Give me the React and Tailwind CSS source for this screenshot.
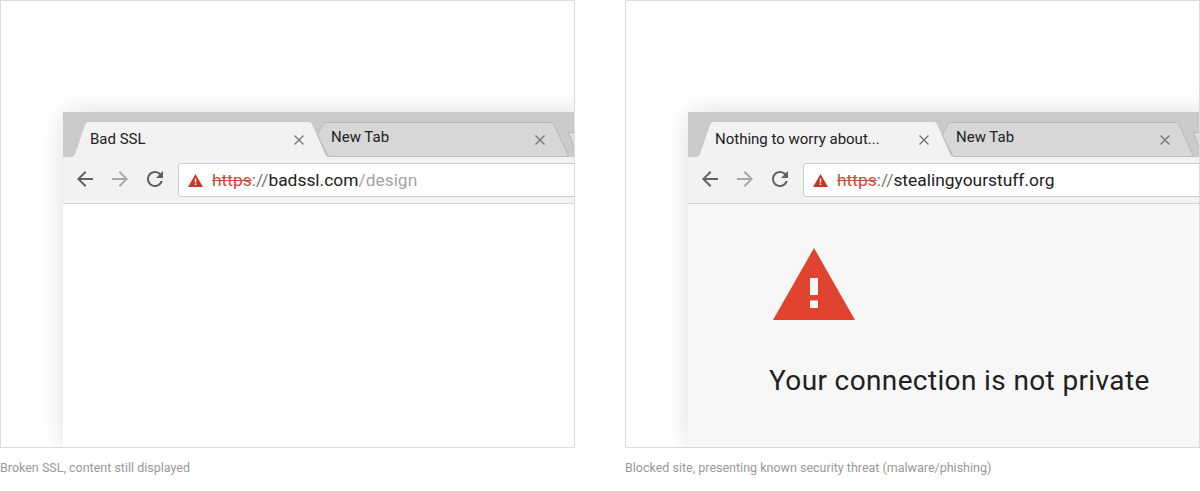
const font = { fontFamily: 'Roboto, sans-serif' };

function TabClose() {
    return (
        <svg width="10" height="10" viewBox="0 0 10 10" className="shrink-0" fill="none" stroke="#757575" strokeWidth="1.4">
            <path d="M0.5 0.5 9.5 9.5M9.5 0.5 0.5 9.5" />
        </svg>
    );
}

function ActiveTab({ title }) {
    return (
        <div className="relative z-10 flex h-[35px] w-[257px] shrink-0 items-center text-[15px] text-[#212121]">
            <svg className="absolute inset-0" width="257" height="35" viewBox="0 0 257 35">
                <path d="M0 35Q3 35 4.500 31L14 3Q15 0 18 0H237Q240 0 241 2L254 32Q255.500 35 257 35Z" fill="#f2f2f2" />
            </svg>
            <span className="relative ml-[19px] w-[204px]">{title}</span>
            <span className="relative"><TabClose /></span>
        </div>
    );
}

function InactiveTab() {
    return (
        <div className="relative -ml-[14px] flex h-[35px] w-[255px] shrink-0 items-center text-[15px] text-[#212121]">
            <svg className="absolute inset-0" width="255" height="35" viewBox="0 0 255 35">
                <path d="M16 34.500Q14 34.500 13 32L4 14Q3.500 13 4 12L9 2.500Q10 0.500 12 0.500H237Q239 0.500 240 2.500L254.500 34.500Z" fill="#d7d7d7" stroke="#b9b9b9" />
            </svg>
            <span className="relative ml-[17px] -mt-[5px] w-[204px]">New Tab</span>
            <span className="relative"><TabClose /></span>
        </div>
    );
}

function NextTab() {
    return (
        <svg className="-ml-[2px] shrink-0" width="30" height="35" viewBox="0 0 30 35">
            <path d="M11 35 1.500 10.500H30V35Z" fill="#dcdcdc" stroke="#b9b9b9" />
        </svg>
    );
}

function NavIcon({ d, color }) {
    return (
        <svg width="24" height="24" viewBox="0 0 24 24" fill={color} className="shrink-0">
            <path d={d} />
        </svg>
    );
}

function Browser({ title, children, address, contentClass }) {
    return (
        <div className="flex w-[560px] shrink-0 grow flex-col bg-white shadow-[0_0_24px_rgba(0,0,0,0.13)]">
            <div className="flex h-[45px] shrink-0 bg-[#cacaca] pl-[8px] pt-[10px]">
                <ActiveTab title={title} />
                <InactiveTab />
                <NextTab />
            </div>
            <div className="flex h-[47px] shrink-0 items-start gap-[11px] border-b border-[#d4d4d4] bg-[#f2f2f2] pl-[10px] pt-[6px]">
                <div className="mt-[4px]"><NavIcon color="#616161" d="M20 11H7.830l5.590-5.590L12 4l-8 8 8 8 1.410-1.410L7.830 13H20v-2z" /></div>
                <div className="mt-[4px]"><NavIcon color="#a8a8a8" d="M4 13h12.170l-5.590 5.590L12 20l8-8-8-8-1.410 1.410L16.170 11H4v2z" /></div>
                <div className="mt-[4px]"><NavIcon color="#616161" d="M17.650 6.350C16.200 4.900 14.210 4 12 4c-4.420 0-7.990 3.580-7.990 8s3.570 8 7.990 8c3.730 0 6.840-2.550 7.730-6h-2.080c-.820 2.330-3.040 4-5.650 4-3.310 0-6-2.690-6-6s2.690-6 6-6c1.660 0 3.140.690 4.220 1.780L13 11h7V4l-2.350 2.350z" /></div>
                <div className="flex h-[34px] grow items-center rounded-[3px] border border-[#cdcdcd] bg-white pl-[9px] text-[17.4px]">
                    <svg width="15" height="13" viewBox="0 0 15 13" className="shrink-0">
                        <path d="M7.500 0 15 13H0Z" fill="#c9392b" />
                        <path d="M6.800 4.500h1.400v4H6.800zM6.800 9.500h1.400v1.500H6.800z" fill="#fff" />
                    </svg>
                    <span className="ml-[9px] text-[#d0493b] line-through">https</span>
                    <span className="text-[#757575]">://</span>
                    {address}
                </div>
            </div>
            <div className={contentClass}>{children}</div>
        </div>
    );
}

function Figure({ caption, children }) {
    return (
        <div className="flex w-[575px] flex-col">
            <div className="flex h-[448px] flex-col overflow-hidden border border-[#dcdcdc] bg-white pl-[62px] pt-[111px]">
                {children}
            </div>
            <p className="mt-[12px] text-[12.5px] leading-[16px] text-[#999999]">{caption}</p>
        </div>
    );
}

export default function App() {
    return (
        <div className="flex h-[491px] w-[1200px] justify-between overflow-hidden bg-white" style={font}>
            <Figure caption="Broken SSL, content still displayed">
                <Browser
                    title="Bad SSL"
                    contentClass="grow bg-white"
                    address={<><span className="text-[#212121]">badssl.com</span><span className="text-[#a3a3a3]">/design</span></>}
                />
            </Figure>
            <Figure caption="Blocked site, presenting known security threat (malware/phishing)">
                <Browser
                    title="Nothing to worry about..."
                    contentClass="grow bg-[#f7f7f7] pl-[81px] pt-[44px]"
                    address={<span className="text-[#212121]">stealingyourstuff.org</span>}
                >
                    <svg width="82" height="72" viewBox="0 0 82 72" className="ml-[4px] block">
                        <path d="M41 0 82 72H0Z" fill="#e04330" />
                        <path d="M37 30h8v17h-8zM37 52.500h8v7.500h-8z" fill="#f7f7f7" />
                    </svg>
                    <h1 className="mt-[43px] text-[28px] leading-[36px] font-normal tracking-[0.37px] text-[#212121]">Your connection is not private</h1>
                </Browser>
            </Figure>
        </div>
    );
}
